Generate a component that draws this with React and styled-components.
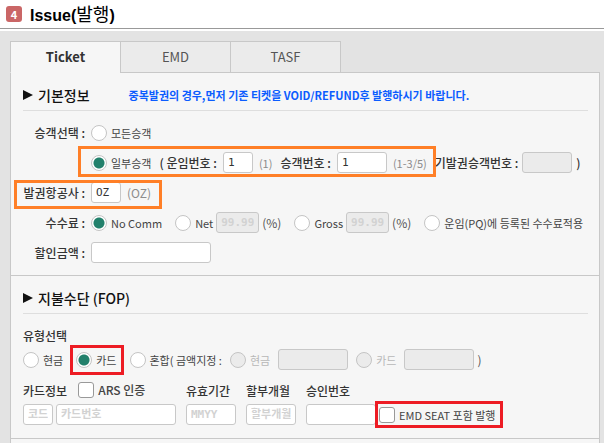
import React from "react";
import styled, { createGlobalStyle, css } from "styled-components";

const sans = `"Noto Sans CJK KR", sans-serif`;
const mono = `"DejaVu Sans Mono", "Noto Sans CJK KR", monospace`;
const orange = "#ff7f27";
const red = "#ed1c24";
const line = "#c8c8c8";

const GlobalStyle = createGlobalStyle`
  *, *::before, *::after { box-sizing: border-box; }
  body { margin: 0; background: #e3e3e3; font-family: ${sans}; font-size: 12px; color: #333; }
  input, button { font-family: inherit; margin: 0; }
`;

const Header = styled.header`
  display: flex;
  align-items: center;
  gap: 8px;
  height: 29px;
  padding-left: 6px;
  background: #fff;
  border-bottom: 1px solid #999;
`;
const StepBadge = styled.span`
  display: flex;
  align-items: center;
  justify-content: center;
  width: 16px;
  height: 16px;
  border-radius: 3px;
  background: #ca6666;
  color: #fff;
  font-size: 11px;
  font-weight: 700;
`;
const Heading = styled.h1`
  margin: 0;
  font: 700 16px/24px "Liberation Sans", "Noto Sans CJK KR", sans-serif;
  color: #000;
`;
const HeadingKorean = styled.span`
  font: 400 18px/24px ${sans};
`;

const Body = styled.main`
  padding: 10px 4px 0 10px;
  border-top: 2px solid #fff;
`;
const TabList = styled.div`
  display: flex;
  position: relative;
  margin-bottom: -1px;
`;
const Tab = styled.button`
  width: 110px;
  height: 32px;
  padding: 0;
  border: 1px solid ${line};
  border-right-width: 0;
  background: #ebebeb;
  color: #555;
  font-size: 13px;
  line-height: 20px;
  &:last-child { border-right-width: 1px; width: 111px; }
  ${(p) =>
    p["aria-selected"] &&
    css`
      background: #f6f6f6;
      border-bottom-color: #f6f6f6;
      color: #333;
      font-weight: 700;
    `}
`;
const Panel = styled.div`
  min-height: calc(100vh - 72px);
  background: #f6f6f6;
  border: 1px solid ${line};
  border-bottom-width: 0;
`;
const Section = styled.section`
  padding: 11px 11px 12px 12px;
  border-bottom: 1px solid ${line};
`;
const SectionHead = styled.div`
  display: flex;
  align-items: center;
  gap: 39px;
  height: 27px;
  padding-bottom: 4px;
  border-bottom: 1px solid #dedede;
`;
const SectionTitle = styled.h2`
  display: flex;
  align-items: center;
  gap: 5px;
  margin: 0;
  font-size: 14px;
  line-height: 20px;
  font-weight: 500;
  color: #111;
`;
const Arrow = styled.svg`
  width: 10px;
  height: 10px;
  fill: #111;
`;
const Notice = styled.p`
  margin: 0;
  font-size: 11px;
  line-height: 20px;
  font-weight: 700;
  color: #0b5cff;
`;

const Rows = styled.div`
  display: flex;
  flex-direction: column;
  gap: 9px;
  padding-top: 12px;
`;
const Row = styled.div`
  display: flex;
  align-items: center;
  gap: ${(p) => p.$gap ?? 6}px;
  min-height: 20px;
  white-space: nowrap;
`;
const Indent = styled(Row)`
  padding-left: 68px;
`;
const RowLabel = styled.label`
  width: 62px;
  text-align: right;
  font-weight: 500;
  line-height: 20px;
`;
const Text = styled.span`
  font-weight: 500;
  line-height: 20px;
`;
const FieldLabel = styled.label`
  display: inline-flex;
  align-items: center;
  gap: ${(p) => p.$gap ?? 6}px;
  font-weight: 500;
  line-height: 20px;
`;
const Hint = styled.span`
  font-size: ${(p) => p.$size ?? 11}px;
  font-weight: 400;
  color: #8c8c8c;
  line-height: 20px;
`;
const Unit = styled.span`
  line-height: 20px;
  color: #555;
`;

const Choice = styled.label`
  display: inline-flex;
  align-items: center;
  gap: 4px;
  font-size: ${(p) => p.$size ?? 11}px;
  font-weight: ${(p) => p.$weight ?? 400};
  line-height: 20px;
  color: ${(p) => (p.$muted ? "#b8b8b8" : "#444")};
`;
const Radio = styled.input.attrs({ type: "radio" })`
  appearance: none;
  width: 16px;
  height: 16px;
  border: 1px solid #c4c4c4;
  border-radius: 50%;
  background: #fff;
  &:checked { background: radial-gradient(circle, #22806b 5px, #fff 6px); }
  &:disabled { background: #ebebeb; }
`;
const Check = styled.input.attrs({ type: "checkbox" })`
  appearance: none;
  width: 16px;
  height: 16px;
  border: 1px solid #999;
  border-radius: 3px;
  background: #fff;
`;
const Box = styled.input.attrs({ type: "text" })`
  width: ${(p) => p.$w}px;
  height: 21px;
  padding: 0 4px;
  border: 1px solid ${line};
  border-radius: 3px;
  background: #fff;
  color: #333;
  font-family: ${mono};
  font-size: 11px;
  line-height: 19px;
  &::placeholder { color: #d2d2d2; opacity: 1; font-weight: 700; }
  &:disabled { background: #ebebeb; }
`;

/* Callout rectangle drawn over the controls it surrounds */
const Callout = styled.div`
  position: relative;
  display: inline-flex;
  align-items: center;
  gap: ${(p) => p.$gap ?? 6}px;
  &::after {
    content: "";
    position: absolute;
    inset: ${(p) => p.$inset};
    border: 3px solid ${(p) => p.$color};
    pointer-events: none;
  }
`;

const Fields = styled.div`
  display: flex;
  gap: 10px;
  white-space: nowrap;
`;
const Field = styled.div`
  display: flex;
  flex-direction: column;
  gap: 4px;
`;
const FieldHead = styled.div`
  display: flex;
  align-items: center;
  gap: 11px;
  height: 20px;
  font-weight: 500;
`;
const Type = styled.div`
  padding-top: 12px;
  display: flex;
  flex-direction: column;
  gap: 3px;
`;
const CardBlock = styled.div`
  padding: 10px 0 1px;
`;

function Title({ children }) {
  return (
    <SectionTitle>
      <Arrow viewBox="0 0 10 10" aria-hidden="true">
        <path d="M0 0L10 5L0 10Z" />
      </Arrow>
      {children}
    </SectionTitle>
  );
}

function RateChoice({ label }) {
  return (
    <Row $gap={3}>
      <Choice>
        <Radio name="comm" />
        {label}
      </Choice>
      <Box $w={43} placeholder="99.99" aria-label={label} disabled />
      <Unit>(%)</Unit>
    </Row>
  );
}

export default function App() {
  return (
    <>
      <GlobalStyle />
      <Header>
        <StepBadge>4</StepBadge>
        <Heading>
          Issue(<HeadingKorean>발행</HeadingKorean>)
        </Heading>
      </Header>
      <Body>
        <TabList role="tablist">
          <Tab role="tab" aria-selected={true}>Ticket</Tab>
          <Tab role="tab">EMD</Tab>
          <Tab role="tab">TASF</Tab>
        </TabList>
        <Panel role="tabpanel">
          <Section>
            <SectionHead>
              <Title>기본정보</Title>
              <Notice>중복발권의 경우,먼저 기존 티켓을 VOID/REFUND후 발행하시기 바랍니다.</Notice>
            </SectionHead>
            <Rows>
              <Row>
                <RowLabel as="span">승객선택 :</RowLabel>
                <Choice>
                  <Radio name="passenger" />
                  모든승객
                </Choice>
              </Row>
              <Indent $gap={8}>
                <Callout $color={orange} $inset="-6px -9px -4px -13px" $gap={8}>
                  <Choice>
                    <Radio name="passenger" defaultChecked />
                    일부승객
                  </Choice>
                  <FieldLabel>
                    ( 운임번호 :
                    <Box $w={30} defaultValue="1" />
                    <Hint>(1)</Hint>
                  </FieldLabel>
                  <FieldLabel>
                    승객번호 :
                    <Box $w={50} defaultValue="1" />
                    <Hint>(1-3/5)</Hint>
                  </FieldLabel>
                </Callout>
                <FieldLabel $gap={4}>
                  기발권승객번호 :
                  <Box $w={50} disabled />
                  <Text>)</Text>
                </FieldLabel>
              </Indent>
              <Row>
                <Callout $color={orange} $inset="-2px -11px -6px -9px">
                  <RowLabel htmlFor="carrier">발권항공사 :</RowLabel>
                  <Box id="carrier" $w={30} defaultValue="OZ" />
                  <Hint $size={12}>(OZ)</Hint>
                </Callout>
              </Row>
              <Row $gap={13}>
                <Row>
                  <RowLabel as="span">수수료 :</RowLabel>
                  <Choice>
                    <Radio name="comm" defaultChecked />
                    No Comm
                  </Choice>
                </Row>
                <RateChoice label="Net" />
                <RateChoice label="Gross" />
                <Choice>
                  <Radio name="comm" />
                  운임(PQ)에 등록된 수수료적용
                </Choice>
              </Row>
              <Row>
                <RowLabel htmlFor="discount">할인금액 :</RowLabel>
                <Box id="discount" $w={120} />
              </Row>
            </Rows>
          </Section>
          <Section>
            <SectionHead>
              <Title>지불수단 (FOP)</Title>
            </SectionHead>
            <Type>
              <Text>유형선택</Text>
              <Row $gap={13}>
                <Choice>
                  <Radio name="fop" />
                  현금
                </Choice>
                <Callout $color={red} $inset="-5px -7px -5px -6px">
                  <Choice>
                    <Radio name="fop" defaultChecked />
                    카드
                  </Choice>
                </Callout>
                <Row $gap={8}>
                  <Choice>
                    <Radio name="fop" />
                    혼합( 금액지정 :
                  </Choice>
                  <Choice $muted>
                    <Radio name="mix" disabled />
                    현금
                  </Choice>
                  <Box $w={70} aria-label="현금 금액" disabled />
                  <Choice $muted>
                    <Radio name="mix" disabled />
                    카드
                  </Choice>
                  <Row $gap={3}>
                    <Box $w={70} aria-label="카드 금액" disabled />
                    <Unit>)</Unit>
                  </Row>
                </Row>
              </Row>
            </Type>
            <CardBlock>
              <Fields>
                <Field>
                  <FieldHead>
                    카드정보
                    <Choice $size={12} $weight={500}>
                      <Check />
                      ARS 인증
                    </Choice>
                  </FieldHead>
                  <Row $gap={3}>
                    <Box $w={30} placeholder="코드" aria-label="카드 코드" />
                    <Box $w={120} placeholder="카드번호" aria-label="카드번호" />
                  </Row>
                </Field>
                <Field>
                  <FieldHead as="label" htmlFor="expiry">유효기간</FieldHead>
                  <Box id="expiry" $w={50} placeholder="MMYY" />
                </Field>
                <Field>
                  <FieldHead as="label" htmlFor="months">할부개월</FieldHead>
                  <Box id="months" $w={50} placeholder="할부개월" />
                </Field>
                <Field>
                  <FieldHead as="label" htmlFor="approval">승인번호</FieldHead>
                  <Row $gap={3}>
                    <Box id="approval" $w={70} />
                    <Callout $color={red} $inset="-4px -7px -3px -4px">
                      <Choice>
                        <Check />
                        EMD SEAT 포함 발행
                      </Choice>
                    </Callout>
                  </Row>
                </Field>
              </Fields>
            </CardBlock>
          </Section>
        </Panel>
      </Body>
    </>
  );
}
